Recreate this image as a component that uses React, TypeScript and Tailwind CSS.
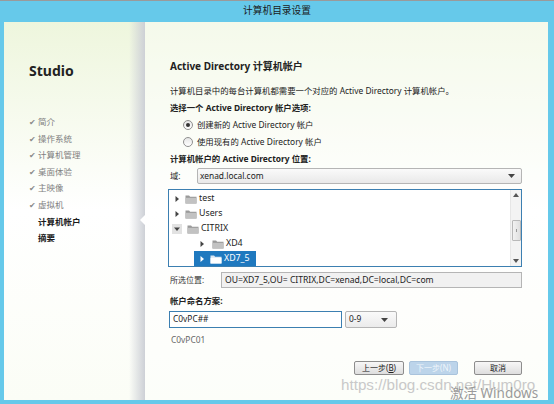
import React from "react";

const font = { fontFamily: '"Noto Sans", "Noto Sans CJK SC", sans-serif' };

const Folder = ({ light }: { light?: boolean }) => (
  <svg width="12" height="10" viewBox="0 0 12 10" className="shrink-0">
    <path d="M0.5 1.5h3.6l1 1.2h6.4v6.8H0.5z" fill={light ? "#dbe7f2" : "#9a9a9a"} />
    <path d="M0.5 3.8h11v5.7h-11z" fill={light ? "#ffffff" : "#c2c2c2"} />
  </svg>
);

const Arrow = ({ down, white }: { down?: boolean; white?: boolean }) => (
  <svg width="6" height="6" viewBox="0 0 6 6" className="shrink-0">
    {down ? (
      <path d="M0 1.5h6L3 5z" fill="#444" />
    ) : (
      <path d="M1.5 0v6L5 3z" fill={white ? "#fff" : "#444"} />
    )}
  </svg>
);

const Caret = () => (
  <svg width="7" height="4" viewBox="0 0 7 4">
    <path d="M0 0h7L3.5 4z" fill="#444" />
  </svg>
);

const Radio = ({ on }: { on?: boolean }) => (
  <span className="w-[10px] h-[10px] rounded-full border border-[#8f8f8f] bg-gradient-to-b from-[#e6e6e6] to-white flex items-center justify-center shrink-0">
    {on && <span className="w-[4px] h-[4px] rounded-full bg-[#333]" />}
  </span>
);

const steps = ["简介", "操作系统", "计算机管理", "桌面体验", "主映像", "虚拟机"];

export default function App() {
  return (
    <div style={font} className="w-[554px] h-[404px] bg-[#66c9ea] border-t border-[#9a9a9a] flex flex-col overflow-hidden relative">
      {/* Title */}
      <div className="h-[21px] flex items-center justify-center text-[9.7px] text-[#1a1a1a]">计算机目录设置</div>

      <div className="flex ml-[4px] mr-[6px] h-[378px] bg-gradient-to-b from-[#eef6dd] via-white to-[#fbfdf6]">
        {/* Sidebar */}
        <div className="w-[141px] relative pl-[25px] pt-[39px]">
          <div className="absolute right-0 top-0 bottom-0 w-[16px] bg-gradient-to-r from-transparent to-[#cdd0d6]" />
          <div className="text-[14px] font-bold text-[#222] leading-[20px]">Studio</div>
          <div className="mt-[33px] flex flex-col text-[8.5px] leading-[16.6px]">
            {steps.map((s) => (
              <div key={s} className="flex items-center text-[#808080]">
                <span className="w-[9px] text-[8px] text-[#8a8a8a]">✔</span>
                <span>{s}</span>
              </div>
            ))}
            <div className="pl-[9px] font-bold text-[#1a1a1a]">计算机帐户</div>
            <div className="pl-[9px] font-bold text-[#1a1a1a]">摘要</div>
          </div>
          <div className="absolute right-0 top-[193px] w-0 h-0 border-y-[5px] border-y-transparent border-r-[5px] border-r-white" />
        </div>

        {/* Main */}
        <div className="flex-1 pl-[25px] pr-[26px] pt-[36px] text-[8.4px] text-[#222] bg-white/40">
          <div className="text-[10px] font-bold leading-[16px]">Active Directory 计算机帐户</div>
          <div className="mt-[9px] leading-[16px]">计算机目录中的每台计算机都需要一个对应的 Active Directory 计算机帐户。</div>
          <div className="font-bold leading-[17px]">选择一个 Active Directory 帐户选项:</div>
          <div className="pl-[13px] flex items-center gap-[4px] leading-[17px]">
            <Radio on />
            <span>创建新的 Active Directory 帐户</span>
          </div>
          <div className="pl-[13px] flex items-center gap-[4px] leading-[17px]">
            <Radio />
            <span>使用现有的 Active Directory 帐户</span>
          </div>
          <div className="font-bold leading-[17px]">计算机帐户的 Active Directory 位置:</div>

          <div className="flex items-center mt-[1px]">
            <span className="w-[27px]">域:</span>
            <div className="flex-1 h-[16px] border border-[#b5b5b5] bg-gradient-to-b from-[#fafafa] to-[#e9e9e9] rounded-[2px] flex items-center justify-between pl-[2px] pr-[6px]">
              <span>xenad.local.com</span>
              <Caret />
            </div>
          </div>

          {/* Tree */}
          <div className="mt-[5px] ml-[-2px] h-[78px] border border-[#3c7fb1] bg-white flex text-[8.8px]">
            <div className="flex-1 flex flex-col pt-[1px] leading-[15px]">
              <div className="flex items-center h-[15px] pl-[5px]"><Arrow /><span className="ml-[5px] flex items-center gap-[2px]"><Folder />test</span></div>
              <div className="flex items-center h-[15px] pl-[5px]"><Arrow /><span className="ml-[5px] flex items-center gap-[2px]"><Folder />Users</span></div>
              <div className="flex items-center h-[15px] pl-[3px]">
                <span className="w-[10px] h-[10px] bg-[#e2e2e2] flex items-center justify-center"><Arrow down /></span>
                <span className="ml-[5px] flex items-center gap-[2px]"><Folder />CITRIX</span>
              </div>
              <div className="flex items-center h-[15px] pl-[30px]"><Arrow /><span className="ml-[7px] flex items-center gap-[2px]"><Folder />XD4</span></div>
              <div className="flex items-center h-[15px] ml-[25px] w-[62px] pl-[5px] bg-[#1f79bf] text-white"><Arrow white /><span className="ml-[5px] flex items-center gap-[2px]"><Folder light />XD7_5</span></div>
            </div>
            <div className="w-[11px] bg-[#f3f3f3] border-l border-[#e6e6e6] flex flex-col items-center justify-between py-[3px] relative">
              <svg width="6" height="4" viewBox="0 0 6 4"><path d="M0 4h6L3 0z" fill="#555" /></svg>
              <svg width="6" height="4" viewBox="0 0 6 4"><path d="M0 0h6L3 4z" fill="#555" /></svg>
              <div className="absolute left-[1px] right-[0px] top-[30px] h-[21px] border border-[#b9b9b9] bg-gradient-to-r from-[#f2f2f2] to-[#e0e0e0] rounded-[1px] flex items-center justify-center">
                <span className="w-[1px] h-[3px] bg-[#999]" />
              </div>
            </div>
          </div>

          <div className="flex items-center mt-[5px]">
            <span className="w-[51px] text-[8px] text-[#333]">所选位置:</span>
            <div className="flex-1 h-[16px] border border-[#b5b5b5] bg-[#f1f1f1] pl-[3px] flex items-center text-[8.6px]">
              OU=XD7_5,OU= CITRIX,DC=xenad,DC=local,DC=com
            </div>
          </div>

          <div className="mt-[4px] font-bold leading-[17px]">帐户命名方案:</div>
          <div className="flex items-center gap-[3px] mt-[2px] ml-[-1px]">
            <div className="w-[173px] h-[17px] border border-[#3c7fb1] bg-white pl-[3px] flex items-center">C0vPC##</div>
            <div className="w-[52px] h-[17px] border border-[#b5b5b5] rounded-[2px] bg-gradient-to-b from-[#fafafa] to-[#ebebeb] pl-[3px] pr-[8px] flex items-center justify-between">
              <span>0-9</span>
              <Caret />
            </div>
          </div>
          <div className="mt-[5px] pl-[1px] text-[#666] leading-[14px]">C0vPC01</div>

          <div className="mt-[14px] flex justify-end text-[8px]">
            <div className="w-[50px] h-[14px] border border-[#8d8d8d] rounded-[2px] bg-gradient-to-b from-[#f7f7f7] to-[#dedede] flex items-center justify-center">上一步(<u>B</u>)</div>
            <div className="ml-[5px] w-[49px] h-[14px] border border-[#a9c3dc] rounded-[2px] bg-[#bcd4ea] text-[#eef4fa] flex items-center justify-center">下一步(N)</div>
            <div className="ml-[16px] w-[48px] h-[14px] border border-[#8d8d8d] rounded-[2px] bg-gradient-to-b from-[#f7f7f7] to-[#dedede] flex items-center justify-center">取消</div>
          </div>
        </div>
      </div>

      {/* Watermarks */}
      <div className="absolute left-[341px] top-[375px] text-[15.2px] leading-[18px] text-[#c9c9c9]" style={{ fontFamily: '"Liberation Sans", sans-serif' }}>https://blog.csdn.net/Hum0ro</div>
      <div className="absolute left-[450px] top-[384px] text-[13.5px] leading-[16px] text-[#9a9a9a]" style={{ fontFamily: '"Noto Sans", "Noto Sans CJK SC", sans-serif' }}>激活 Windows</div>
    </div>
  );
}
